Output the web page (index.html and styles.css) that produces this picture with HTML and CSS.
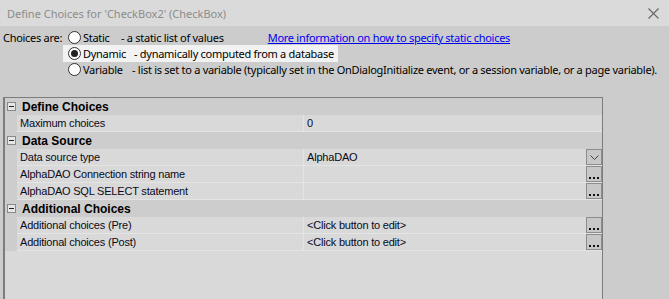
FILE: index.html
```html
<html>
<head>
    <title>Define Choices</title>
    <link rel="stylesheet" href="styles.css">
</head>
<body>
    <div class="titlebar">
        <span class="title">Define Choices for 'CheckBox2' (CheckBox)</span>
        <svg class="close" width="11" height="11" viewBox="0 0 11 11">
            <path d="M0.5 0.5 L10.5 10.5 M10.5 0.5 L0.5 10.5" stroke="#666" stroke-width="1.1" fill="none"/>
        </svg>
    </div>

    <div class="choices">
        <div class="choice-row">
            <span class="lead">Choices are:</span>
            <span class="option">
                <span class="radio"></span>
                <span class="opt-name opt-static">Static</span>
                <span>- a static list of values</span>
            </span>
            <a class="more" href="#">More information on how to specify static choices</a>
        </div>
        <div class="choice-row">
            <span class="lead"></span>
            <span class="option selected">
                <span class="radio checked"></span>
                <span class="opt-name opt-dynamic">Dynamic</span>
                <span>- dynamically computed from a database</span>
            </span>
        </div>
        <div class="choice-row">
            <span class="lead"></span>
            <span class="option">
                <span class="radio"></span>
                <span class="opt-name opt-variable">Variable</span>
                <span>- list is set to a variable (typically set in the OnDialogInitialize event, or a session variable, or a page variable).</span>
            </span>
        </div>
    </div>

    <div class="grid">
        <div class="cat"><span class="toggle"></span><span class="cat-name">Define Choices</span></div>
        <div class="prop">
            <span class="gutter"></span><span class="name">Maximum choices</span><span class="value">0</span>
        </div>

        <div class="cat"><span class="toggle"></span><span class="cat-name">Data Source</span></div>
        <div class="prop">
            <span class="gutter"></span><span class="name">Data source type</span>
            <span class="value">AlphaDAO<span class="btn drop"><svg width="9" height="5" viewBox="0 0 9 5"><path d="M0.5 0.5 L4.5 4.5 L8.5 0.5" stroke="#444" fill="none"/></svg></span></span>
        </div>
        <div class="prop">
            <span class="gutter"></span><span class="name">AlphaDAO Connection string name</span>
            <span class="value"><span class="btn dots"><i></i><i></i><i></i></span></span>
        </div>
        <div class="prop">
            <span class="gutter"></span><span class="name">AlphaDAO SQL SELECT statement</span>
            <span class="value"><span class="btn dots"><i></i><i></i><i></i></span></span>
        </div>

        <div class="cat"><span class="toggle"></span><span class="cat-name">Additional Choices</span></div>
        <div class="prop">
            <span class="gutter"></span><span class="name">Additional choices (Pre)</span>
            <span class="value">&lt;Click button to edit&gt;<span class="btn dots"><i></i><i></i><i></i></span></span>
        </div>
        <div class="prop">
            <span class="gutter"></span><span class="name">Additional choices (Post)</span>
            <span class="value">&lt;Click button to edit&gt;<span class="btn dots"><i></i><i></i><i></i></span></span>
        </div>
    </div>
</body>
</html>
```

FILE: styles.css
```css
* { margin: 0; padding: 0; box-sizing: border-box; }
body { width: 669px; height: 299px; overflow: hidden; background: #cccccc; font-family: "Noto Sans", sans-serif; font-size: 11px; color: #000; }

.titlebar { height: 26px; background: #dadada; display: flex; align-items: center; justify-content: space-between; padding: 0 10px 0 7px; }
.title { color: #8c8c8c; font-size: 11px; }
.close { display: block; }

.choices { padding-top: 3px; height: 71px; letter-spacing: -0.28px; }
.choice-row { display: flex; align-items: center; height: 16px; white-space: nowrap; }
.lead { flex: none; width: 63px; padding-left: 3px; }
.option { flex: none; display: flex; align-items: center; height: 17px; padding-left: 5px; padding-right: 4px; }
.option.selected { background: #f2f2f2; }
.radio { flex: none; width: 13px; height: 13px; border: 1px solid #333; border-radius: 50%; margin-right: 2px; position: relative; background: #fff; }
.radio.checked::after { content: ""; position: absolute; left: 2px; top: 2px; width: 7px; height: 7px; border-radius: 50%; background: #222; }
.opt-static { width: 38px; }
.opt-dynamic { width: 51px; }
.opt-variable { width: 49px; }
.more { margin-left: 40px; color: #0000ee; text-decoration: underline; }

.grid { margin-left: 3px; width: 600px; height: 202px; border: 1px solid #7d7d7d; border-bottom: 0; border-left-width: 2px; background: #d9d9d9; font-family: "Liberation Sans", Arial, sans-serif; font-size: 11px; letter-spacing: -0.2px; color: #0a0a20; }
.cat { display: flex; align-items: center; height: 17px; background: #cdcdcd; }
.toggle { width: 9px; height: 9px; margin: 0 6px 0 2px; border: 1px solid #8a8a8a; background: #e6e6e6; position: relative; }
.toggle::after { content: ""; position: absolute; left: 1px; top: 3px; width: 5px; height: 1px; background: #222; }
.cat-name { font-weight: bold; font-size: 12px; letter-spacing: 0; color: #000; }
.prop { display: grid; grid-template-columns: 12px 287px 1fr; height: 17px; }
.gutter { background: #cdcdcd; }
.name, .value { display: flex; align-items: center; background: #d9d9d9; border-bottom: 1px solid #e4e4e4; padding-left: 3px; }
.name { border-right: 1px solid #e4e4e4; }
.value { position: relative; }
.btn { position: absolute; right: 0; top: 0; width: 16px; height: 16px; border: 1px solid #8c8c8c; background: #c8c8c8; display: flex; align-items: center; justify-content: center; }
.dots { align-items: flex-end; gap: 2px; padding-bottom: 2px; }
.dots i { display: block; width: 2px; height: 2px; background: #111; }
```
